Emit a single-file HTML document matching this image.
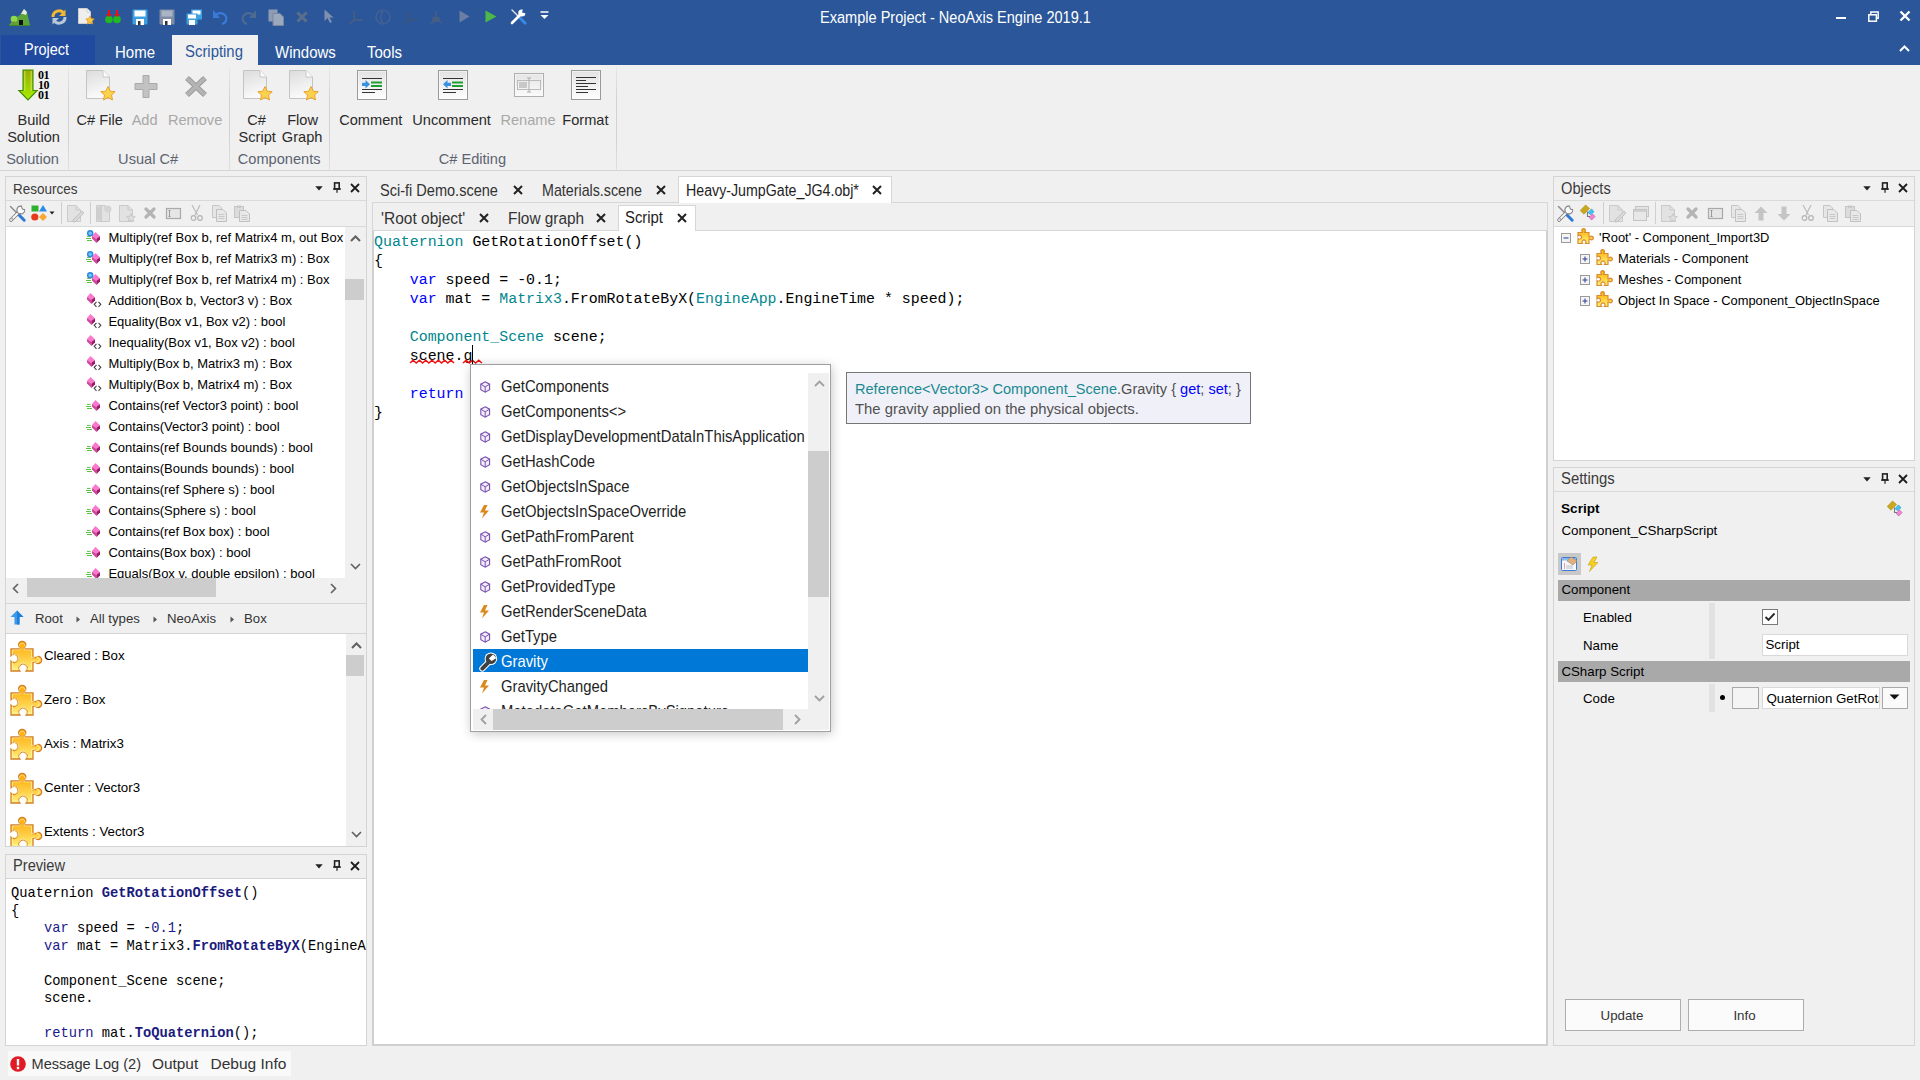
<!DOCTYPE html><html><head><meta charset="utf-8"><style>
*{margin:0;padding:0;box-sizing:border-box}
html,body{width:1920px;height:1080px;overflow:hidden;background:#f0f0f0;font-family:"Liberation Sans",sans-serif;color:#1e1e1e}
.a{position:absolute}
svg.a{overflow:visible}
.t{position:absolute;white-space:pre;line-height:1}
.m{font-family:"Liberation Mono",monospace}
</style></head><body>
<div class="a" style="left:0px;top:0px;width:1920px;height:65px;background:#2b579a"></div>
<div class="t " style="left:820px;top:10.68px;font-size:14.55px;color:#ffffff;transform:scaleY(1.07);transform-origin:0 12.32px;">Example Project - NeoAxis Engine 2019.1</div>
<div class="a" style="left:1836px;top:16.5px;width:9.5px;height:2.2px;background:#fff"></div>
<svg class="a" style="left:1866px;top:9px" width="14" height="14" viewBox="0 0 14 14"><rect x="2.8" y="5.8" width="7.6" height="6.4" fill="none" stroke="#fff" stroke-width="1.5"/><path d="M4.8 5.8V3H12.2V9.2H10.4" fill="none" stroke="#fff" stroke-width="1.4"/></svg>
<svg class="a" style="left:1899px;top:10px" width="12" height="12" viewBox="0 0 12 12"><path d="M1.5 1.5L10.5 10.5M10.5 1.5L1.5 10.5" stroke="#fff" stroke-width="2.3"/></svg>
<svg class="a" style="left:1899px;top:45px" width="11" height="7" viewBox="0 0 11 7"><path d="M1 6L5.5 1.5L10 6" fill="none" stroke="#fff" stroke-width="2"/></svg>
<div class="a" style="left:1px;top:35px;width:94px;height:30px;background:#2049a0"></div>
<div class="t " style="left:24px;top:42.76px;font-size:14.46px;color:#ffffff;transform:scaleY(1.08);transform-origin:0 12.24px;">Project</div>
<div class="t " style="left:115px;top:45.0px;font-size:15px;color:#ffffff;transform:scaleY(1.08);transform-origin:0 12.70px;">Home</div>
<div class="a" style="left:172px;top:35px;width:86px;height:30px;background:#f0f0f0"></div>
<div class="t " style="left:185px;top:45.08px;font-size:14.9px;color:#2b579a;transform:scaleY(1.08);transform-origin:0 12.62px;">Scripting</div>
<div class="t " style="left:275px;top:45.0px;font-size:15px;color:#ffffff;transform:scaleY(1.08);transform-origin:0 12.70px;">Windows</div>
<div class="t " style="left:367px;top:45.0px;font-size:15px;color:#ffffff;transform:scaleY(1.08);transform-origin:0 12.70px;">Tools</div>
<svg class="a" style="left:9px;top:9px" width="21" height="17" viewBox="0 0 21 17"><path d="M0 16L6 9L11 6L15 0L18 3L21 16Z" fill="#5aa43a"/><path d="M12 5L15 0L18 3L17 6L14 5Z" fill="#e8e8e8"/><circle cx="5" cy="10" r="3.3" fill="#8fd848"/><rect x="4.5" y="12" width="1" height="4" fill="#a07030"/><rect x="10" y="11" width="4" height="5" fill="#111"/><path d="M0 16H21V17H0Z" fill="#3d8a2a"/></svg>
<svg class="a" style="left:51px;top:9px" width="16" height="16" viewBox="0 0 16 16"><path d="M2 8A6 6 0 0 1 13 4.5" fill="none" stroke="#f2b830" stroke-width="3"/><path d="M14.5 0.5V7H8Z" fill="#f2b830"/><path d="M14 8A6 6 0 0 1 3 11.5" fill="none" stroke="#b8c8d8" stroke-width="3"/><path d="M1.5 15.5V9H8Z" fill="#b8c8d8"/></svg>
<svg class="a" style="left:78px;top:8px" width="18" height="17" viewBox="0 0 18 17"><g transform="scale(1.0)"><path d="M0.5 0.5H9L12.5 4V15.5H0.5Z" fill="#eeeeee" stroke="#cfcfcf"/><path d="M9 0.5V4H12.5" fill="#fff" stroke="#cfcfcf"/><path d="M12 8L13.3 10.7L16.2 11L14 13L14.7 16L12 14.5L9.3 16L10 13L7.8 11L10.7 10.7Z" fill="#f8c844" stroke="#e89a20" stroke-width="0.8"/></g></svg>
<svg class="a" style="left:105px;top:10px" width="17" height="14" viewBox="0 0 17 14"><circle cx="4" cy="9.5" r="3.8" fill="#22b822"/><circle cx="12" cy="9.5" r="3.8" fill="#22b822"/><path d="M3 0H5V4H7L4 7L1 4H3Z" fill="#ee1111"/><path d="M11 0H13V4H15L12 7L9 4H11Z" fill="#ee1111"/></svg>
<svg class="a" style="left:132px;top:9px" width="16" height="16" viewBox="0 0 16 16"><rect x="0.5" y="0.5" width="15" height="15" rx="1" fill="#3ea0e0"/><rect x="2.5" y="1.5" width="11" height="6" fill="#fff"/><rect x="4" y="10" width="8" height="6" fill="#fff"/><rect x="6" y="12" width="2.5" height="4" fill="#333"/></svg>
<svg class="a" style="left:159px;top:9px" width="16" height="16" viewBox="0 0 16 16"><rect x="0.5" y="0.5" width="15" height="15" rx="1" fill="#7f8ea6"/><rect x="2.5" y="1.5" width="11" height="6" fill="#a9b4c4"/><rect x="4" y="10" width="8" height="6" fill="#fff"/><rect x="6" y="12" width="2.5" height="4" fill="#333"/></svg>
<svg class="a" style="left:186px;top:9px" width="17" height="16" viewBox="0 0 17 16"><rect x="5" y="0.5" width="11" height="10" fill="#3ea0e0"/><rect x="6.5" y="1.5" width="8" height="4" fill="#fff"/><rect x="0.5" y="4.5" width="11" height="11" fill="#3ea0e0"/><rect x="2" y="5.5" width="8" height="4" fill="#fff"/><rect x="3" y="11" width="6" height="5" fill="#fff"/></svg>
<svg class="a" style="left:213px;top:9px" width="16" height="16" viewBox="0 0 16 16"><path d="M3 6A6 5.5 0 1 1 9 15" fill="none" stroke="#3a7ad8" stroke-width="2.2"/><path d="M0 1V9H7Z" fill="#3a7ad8"/></svg>
<svg class="a" style="left:240px;top:9px" width="16" height="16" viewBox="0 0 16 16"><path d="M13 6A6 5.5 0 1 0 7 15" fill="none" stroke="#4d6a90" stroke-width="2.2"/><path d="M16 1V9H9Z" fill="#4d6a90"/></svg>
<svg class="a" style="left:268px;top:9px" width="16" height="17" viewBox="0 0 16 17"><rect x="0.5" y="0.5" width="9" height="12" fill="#8d9bb3"/><path d="M5 4.5H12L15.5 8V16.5H5Z" fill="#9ba8bd" stroke="#7a889f"/></svg>
<svg class="a" style="left:296px;top:11px" width="12" height="12" viewBox="0 0 12 12"><path d="M1.5 1.5L10.5 10.5M10.5 1.5L1.5 10.5" stroke="#5c6e8c" stroke-width="3"/></svg>
<svg class="a" style="left:324px;top:9px" width="10" height="14" viewBox="0 0 10 14"><path d="M0.5 0.5V12L3.5 9L6 14L8 13L5.5 8.5H9.5Z" fill="#7e90b0"/></svg>
<svg class="a" style="left:349px;top:10px" width="15" height="15" viewBox="0 0 15 15"><path d="M5 1V10L1 14M5 10H14" fill="none" stroke="#4a5f80" stroke-width="1.5"/></svg>
<svg class="a" style="left:375px;top:9px" width="16" height="16" viewBox="0 0 16 16"><circle cx="8" cy="8" r="7" fill="none" stroke="#4a6390" stroke-width="1.2"/><path d="M8 2C5 5 5 11 8 14" fill="none" stroke="#4a6390" stroke-width="1.2"/></svg>
<svg class="a" style="left:403px;top:10px" width="15" height="15" viewBox="0 0 15 15"><path d="M5 1V10L1 14M5 10H14" fill="none" stroke="#3f5478" stroke-width="1.5"/></svg>
<svg class="a" style="left:429px;top:10px" width="15" height="15" viewBox="0 0 15 15"><path d="M7 1V9L2 14M7 9L13 13M4 8H10V11H4Z" fill="none" stroke="#4a5f80" stroke-width="1.5"/></svg>
<svg class="a" style="left:459px;top:10px" width="11" height="13" viewBox="0 0 11 13"><path d="M0.5 0.5L10.5 6.5L0.5 12.5Z" fill="#6a7fa3"/></svg>
<svg class="a" style="left:485px;top:10px" width="12" height="13" viewBox="0 0 12 13"><path d="M0.5 0.5L11.5 6.5L0.5 12.5Z" fill="#4cb84a"/></svg>
<svg class="a" style="left:510px;top:8px" width="17" height="17" viewBox="0 0 17 17"><path d="M2 2L7.5 7.5" stroke="#e8e8e8" stroke-width="1.4" stroke-linecap="round"/><path d="M9.8 9.8L15.2 15.2" stroke="#3a8ae8" stroke-width="2.8" stroke-linecap="round"/><path d="M2 15L9.5 7.5" stroke="#fff" stroke-width="2.6" stroke-linecap="round"/><circle cx="11.8" cy="5" r="3.6" fill="#fff"/><path d="M12 4.6L13.2 0.2L17.5 2.2L16.2 5.6Z" fill="#2b579a"/></svg>
<svg class="a" style="left:540px;top:11px" width="9" height="9" viewBox="0 0 9 9"><path d="M0.5 1H8.5" stroke="#fff" stroke-width="1.5"/><path d="M0.5 4H8.5L4.5 8Z" fill="#fff"/></svg>
<div class="a" style="left:0px;top:170px;width:1920px;height:1px;background:#d5d5d5"></div>
<div class="a" style="left:68px;top:66px;width:1px;height:104px;background:linear-gradient(#eaeaea,#d2d2d2 30%,#d2d2d2 70%,#e0e0e0)"></div>
<div class="a" style="left:229px;top:66px;width:1px;height:104px;background:linear-gradient(#eaeaea,#d2d2d2 30%,#d2d2d2 70%,#e0e0e0)"></div>
<div class="a" style="left:329px;top:66px;width:1px;height:104px;background:linear-gradient(#eaeaea,#d2d2d2 30%,#d2d2d2 70%,#e0e0e0)"></div>
<div class="a" style="left:616px;top:66px;width:1px;height:104px;background:linear-gradient(#eaeaea,#d2d2d2 30%,#d2d2d2 70%,#e0e0e0)"></div>
<div class="t" style="left:-166.25px;width:400px;text-align:center;top:112.84px;font-size:14.6px;color:#2a2a2a;">Build</div>
<div class="t" style="left:-166.5px;width:400px;text-align:center;top:129.54px;font-size:14.6px;color:#2a2a2a;">Solution</div>
<div class="t" style="left:-167.5px;width:400px;text-align:center;top:151.54px;font-size:14.6px;color:#5c6470;">Solution</div>
<div class="t" style="left:-100.3px;width:400px;text-align:center;top:112.84px;font-size:14.6px;color:#2a2a2a;">C# File</div>
<div class="t" style="left:-55.400000000000006px;width:400px;text-align:center;top:112.84px;font-size:14.6px;color:#a8a8a8;">Add</div>
<div class="t" style="left:-4.900000000000006px;width:400px;text-align:center;top:112.84px;font-size:14.6px;color:#a8a8a8;">Remove</div>
<div class="t" style="left:-51.900000000000006px;width:400px;text-align:center;top:151.54px;font-size:14.6px;color:#5c6470;">Usual C#</div>
<div class="t" style="left:56.5px;width:400px;text-align:center;top:112.84px;font-size:14.6px;color:#2a2a2a;">C#</div>
<div class="t" style="left:57.19999999999999px;width:400px;text-align:center;top:129.54px;font-size:14.6px;color:#2a2a2a;">Script</div>
<div class="t" style="left:102.60000000000002px;width:400px;text-align:center;top:112.84px;font-size:14.6px;color:#2a2a2a;">Flow</div>
<div class="t" style="left:102.10000000000002px;width:400px;text-align:center;top:129.54px;font-size:14.6px;color:#2a2a2a;">Graph</div>
<div class="t" style="left:79.19999999999999px;width:400px;text-align:center;top:151.54px;font-size:14.6px;color:#5c6470;">Components</div>
<div class="t" style="left:170.8px;width:400px;text-align:center;top:112.84px;font-size:14.6px;color:#2a2a2a;">Comment</div>
<div class="t" style="left:251.60000000000002px;width:400px;text-align:center;top:112.84px;font-size:14.6px;color:#2a2a2a;">Uncomment</div>
<div class="t" style="left:328px;width:400px;text-align:center;top:112.84px;font-size:14.6px;color:#a8a8a8;">Rename</div>
<div class="t" style="left:385.4px;width:400px;text-align:center;top:112.84px;font-size:14.6px;color:#2a2a2a;">Format</div>
<div class="t" style="left:272.4px;width:400px;text-align:center;top:151.54px;font-size:14.6px;color:#5c6470;">C# Editing</div>
<svg class="a" style="left:14px;top:66px" width="42" height="38" viewBox="0 0 42 38"><defs><linearGradient id="ga" x1="0" y1="0" x2="0" y2="1"><stop offset="0" stop-color="#98ac00"/><stop offset="1" stop-color="#a6ec00"/></linearGradient></defs><path d="M9 4H19V24.5H23.2L14 34L4.8 24.5H9Z" fill="url(#ga)" stroke="#3d8c00" stroke-width="1.1"/><path d="M10.8 5V25M17.2 5V25" stroke="#d6ee70" stroke-width="0.8"/><g font-family="Liberation Serif" font-weight="bold" font-size="12" fill="#000" letter-spacing="-0.6"><text x="24" y="12.8">01</text><text x="24" y="22.8">10</text><text x="24" y="32.8">01</text></g></svg>
<svg class="a" style="left:86px;top:70px" width="30" height="32" viewBox="0 0 30 32"><defs><linearGradient id="gd" x1="0" y1="0" x2="0.3" y2="1"><stop offset="0" stop-color="#dcdcdc"/><stop offset="1" stop-color="#fafafa"/></linearGradient></defs><path d="M0.5 0.5H17L23.5 7V28.5H0.5Z" fill="url(#gd)" stroke="#c4c4c4"/><path d="M17 0.5V7H23.5" fill="#fbfbfb" stroke="#c8c8c8"/><path d="M22 16.5L24.3 21.2L29.2 21.7L25.5 25L26.5 30L22 27.5L17.5 30L18.5 25L14.8 21.7L19.7 21.2Z" fill="#fbd24e" stroke="#e79b22" stroke-width="0.9"/></svg>
<svg class="a" style="left:134px;top:74px" width="25" height="25" viewBox="0 0 25 25"><path d="M9 1.5H15V9.5H23V15.5H15V23.5H9V15.5H1V9.5H9Z" fill="#c2c2c2" stroke="#a9a9a9"/></svg>
<svg class="a" style="left:184px;top:75px" width="24" height="23" viewBox="0 0 24 23"><path d="M3 3L21 20M21 3L3 20" stroke="#9d9d9d" stroke-width="5.5" stroke-linecap="butt"/><path d="M3 3L21 20M21 3L3 20" stroke="#b4b4b4" stroke-width="3.4" stroke-linecap="butt"/></svg>
<svg class="a" style="left:243px;top:70px" width="30" height="32" viewBox="0 0 30 32"><defs><linearGradient id="gd" x1="0" y1="0" x2="0.3" y2="1"><stop offset="0" stop-color="#dcdcdc"/><stop offset="1" stop-color="#fafafa"/></linearGradient></defs><path d="M0.5 0.5H17L23.5 7V28.5H0.5Z" fill="url(#gd)" stroke="#c4c4c4"/><path d="M17 0.5V7H23.5" fill="#fbfbfb" stroke="#c8c8c8"/><path d="M22 16.5L24.3 21.2L29.2 21.7L25.5 25L26.5 30L22 27.5L17.5 30L18.5 25L14.8 21.7L19.7 21.2Z" fill="#fbd24e" stroke="#e79b22" stroke-width="0.9"/></svg>
<svg class="a" style="left:289px;top:70px" width="30" height="32" viewBox="0 0 30 32"><defs><linearGradient id="gd" x1="0" y1="0" x2="0.3" y2="1"><stop offset="0" stop-color="#dcdcdc"/><stop offset="1" stop-color="#fafafa"/></linearGradient></defs><path d="M0.5 0.5H17L23.5 7V28.5H0.5Z" fill="url(#gd)" stroke="#c4c4c4"/><path d="M17 0.5V7H23.5" fill="#fbfbfb" stroke="#c8c8c8"/><path d="M22 16.5L24.3 21.2L29.2 21.7L25.5 25L26.5 30L22 27.5L17.5 30L18.5 25L14.8 21.7L19.7 21.2Z" fill="#fbd24e" stroke="#e79b22" stroke-width="0.9"/></svg>
<svg class="a" style="left:357px;top:70px" width="32" height="32" viewBox="0 0 32 32"><g opacity="1"><defs><linearGradient id="gf" x1="0" y1="0" x2="0" y2="1"><stop offset="0" stop-color="#e3e3e3"/><stop offset="1" stop-color="#fdfdfd"/></linearGradient></defs><rect x="0.5" y="0.5" width="29" height="29" fill="#fff" stroke="#9a9a9a"/><rect x="1.5" y="1.5" width="27" height="27" fill="url(#gf)"/><path d="M5 8.5H25M5 19.5H25M5 22.5H18" stroke="#333" stroke-width="1"/><path d="M14 12.5H25M14 16H25" stroke="#20a030" stroke-width="2"/><path d="M5 12.7H8.5V10L13 14.3L8.5 18.5V16H5Z" fill="#3a90e0"/></g></svg>
<svg class="a" style="left:438px;top:70px" width="32" height="32" viewBox="0 0 32 32"><g opacity="1"><defs><linearGradient id="gf" x1="0" y1="0" x2="0" y2="1"><stop offset="0" stop-color="#e3e3e3"/><stop offset="1" stop-color="#fdfdfd"/></linearGradient></defs><rect x="0.5" y="0.5" width="29" height="29" fill="#fff" stroke="#9a9a9a"/><rect x="1.5" y="1.5" width="27" height="27" fill="url(#gf)"/><path d="M5 8.5H25M5 19.5H25M5 22.5H18" stroke="#333" stroke-width="1"/><path d="M14 12.5H25M14 16H25" stroke="#20a030" stroke-width="2"/><path d="M13 12.7H9.5V10L5 14.3L9.5 18.5V16H13Z" fill="#3a90e0"/></g></svg>
<svg class="a" style="left:514px;top:73px" width="32" height="26" viewBox="0 0 32 26"><g opacity="0.75"><defs><linearGradient id="gf" x1="0" y1="0" x2="0" y2="1"><stop offset="0" stop-color="#e3e3e3"/><stop offset="1" stop-color="#fdfdfd"/></linearGradient></defs><rect x="0.5" y="0.5" width="29" height="23" fill="#fff" stroke="#9a9a9a"/><rect x="1.5" y="1.5" width="27" height="21" fill="url(#gf)"/><rect x="3.5" y="7.5" width="23" height="9" fill="none" stroke="#aaa"/><rect x="5" y="9" width="8" height="6" fill="#bbb"/><path d="M15 5V19M13 5H17M13 19H17" stroke="#999"/></g></svg>
<svg class="a" style="left:571px;top:70px" width="32" height="32" viewBox="0 0 32 32"><g opacity="1"><defs><linearGradient id="gf" x1="0" y1="0" x2="0" y2="1"><stop offset="0" stop-color="#e3e3e3"/><stop offset="1" stop-color="#fdfdfd"/></linearGradient></defs><rect x="0.5" y="0.5" width="29" height="29" fill="#fff" stroke="#9a9a9a"/><rect x="1.5" y="1.5" width="27" height="27" fill="url(#gf)"/><path d="M5 7.5H25M5 10.5H15M5 13.5H25M5 16.5H17M5 19.5H25M5 22.5H17" stroke="#333" stroke-width="1"/></g></svg>
<div class="a" style="left:5px;top:176px;width:362px;height:428px;border:1px solid #d4d4d4;background:#f0f0f0"></div>
<div class="a" style="left:6px;top:200px;width:360px;height:1px;background:#d9d9d9"></div>
<div class="a" style="left:6px;top:226px;width:360px;height:1px;background:#d9d9d9"></div>
<div class="t " style="left:13px;top:182.57px;font-size:13.5px;color:#3b3b3b;transform:scaleY(1.12);transform-origin:0 11.43px;">Resources</div>
<svg class="a" style="left:315px;top:186px" width="8" height="5" viewBox="0 0 8 5"><path d="M0.3 0.3H7.7L4 4.6Z" fill="#222"/></svg>
<svg class="a" style="left:333px;top:182px" width="8" height="11" viewBox="0 0 8 11"><rect x="1.6" y="0.9" width="4.6" height="6" fill="#f0f0f0" stroke="#222" stroke-width="1.6"/><rect x="0" y="6.4" width="8" height="1.3" fill="#222"/><rect x="3.4" y="7.5" width="1.2" height="3.3" fill="#222"/></svg>
<svg class="a" style="left:350px;top:183px" width="10" height="10" viewBox="0 0 10 10"><path d="M1 1L9 9M9 1L1 9" stroke="#1c1c1c" stroke-width="1.8"/></svg>
<svg class="a" style="left:9px;top:205px" width="17" height="17" viewBox="0 0 17 17"><path d="M1.5 1.5L7.5 7.5" stroke="#8c8c8c" stroke-width="1.5" stroke-linecap="round"/><path d="M9.8 9.8L15.2 15.2" stroke="#2a7ad6" stroke-width="3" stroke-linecap="round"/><path d="M2 15L9.5 7.5" stroke="#7a7a7a" stroke-width="3.6" stroke-linecap="round"/><path d="M2 15L9.5 7.5" stroke="#fbfbfb" stroke-width="1.8" stroke-linecap="round"/><circle cx="11.8" cy="5" r="3.9" fill="#fbfbfb" stroke="#7a7a7a" stroke-width="1.1"/><path d="M12 4.6L13.2 0.2L17.5 2.2L16.2 5.6Z" fill="#f0f0f0"/><path d="M12.6 1.6L13.4 4.2L16 4.6" fill="none" stroke="#7a7a7a" stroke-width="1"/><circle cx="3.2" cy="13.8" r="0.9" fill="#999"/></svg>
<svg class="a" style="left:31px;top:205px" width="24" height="16" viewBox="0 0 24 16"><rect x="0.5" y="0.5" width="7" height="6" fill="#30b030"/><path d="M12 0L16 6.5H8Z" fill="#2a8ce8"/><circle cx="3.8" cy="12" r="3.6" fill="#e83a1a"/><path d="M12 8L16 12L12 16L8 12Z" fill="#f8a830"/><path d="M18.5 6.5H23.5L21 9.5Z" fill="#222"/></svg>
<div class="a" style="left:61px;top:202px;width:1px;height:22px;background:#cfcfcf"></div>
<svg class="a" style="left:67px;top:205px" width="17" height="17" viewBox="0 0 17 17"><path d="M0.5 0.5H9L13.5 5V16.5H0.5Z" fill="#e2e2e2" stroke="#cacaca"/><path d="M9 0.5V5H13.5" fill="none" stroke="#cacaca"/><path d="M6 15L15 6L17 8L8 17H6Z" fill="#d8d8d8" stroke="#bdbdbd" stroke-width="0.8"/></svg>
<div class="a" style="left:90px;top:202px;width:1px;height:22px;background:#cfcfcf"></div>
<svg class="a" style="left:96px;top:205px" width="17" height="17" viewBox="0 0 17 17"><path d="M0.5 0.5H9L13.5 5V16.5H0.5Z" fill="#e2e2e2" stroke="#cacaca"/><path d="M9 0.5V5H13.5" fill="none" stroke="#cacaca"/><path d="M0.5 2.5L6 0.5V16.5L0.5 14.5Z" fill="#cfcfcf"/><circle cx="12" cy="4" r="3.5" fill="#d4d4d4"/></svg>
<svg class="a" style="left:119px;top:205px" width="17" height="17" viewBox="0 0 17 17"><path d="M0.5 0.5H9L13.5 5V16.5H0.5Z" fill="#e2e2e2" stroke="#cacaca"/><path d="M9 0.5V5H13.5" fill="none" stroke="#cacaca"/><path d="M12 8.5L13.3 11.3L16.3 11.6L14 13.6L14.8 16.5L12 15L9.2 16.5L10 13.6L7.7 11.6L10.7 11.3Z" fill="#dedede" stroke="#c4c4c4" stroke-width="0.8"/></svg>
<svg class="a" style="left:144px;top:207px" width="12" height="12" viewBox="0 0 12 12"><path d="M2 2L10 10M10 2L2 10" stroke="#b4b4b4" stroke-width="3.2" stroke-linecap="round"/></svg>
<svg class="a" style="left:166px;top:208px" width="15" height="11" viewBox="0 0 15 11"><rect x="0.5" y="0.5" width="14" height="10" fill="#e6e6e6" stroke="#a9a9a9" stroke-width="1.2"/><path d="M3.5 2.5V8.5M2.5 2.5H4.5M2.5 8.5H4.5" stroke="#888" stroke-width="0.8"/></svg>
<svg class="a" style="left:190px;top:205px" width="13" height="16" viewBox="0 0 13 16"><path d="M2 0L7.5 10M10 0L5 10" stroke="#bbb" stroke-width="1.2"/><circle cx="3.5" cy="13" r="2.3" fill="none" stroke="#b4b4b4" stroke-width="1.2"/><circle cx="10" cy="13" r="2.3" fill="none" stroke="#b4b4b4" stroke-width="1.2"/></svg>
<svg class="a" style="left:212px;top:205px" width="15" height="17" viewBox="0 0 15 17"><path d="M0.5 0.5H7L9.5 3V12.5H0.5Z" fill="#e6e6e6" stroke="#c6c6c6"/><path d="M4.5 4.5H11L14.5 8V16.5H4.5Z" fill="#e8e8e8" stroke="#c0c0c0"/><path d="M6.5 9.5H12.5M6.5 11.5H12.5M6.5 13.5H12.5" stroke="#c8c8c8"/></svg>
<svg class="a" style="left:234px;top:205px" width="16" height="17" viewBox="0 0 16 17"><rect x="0.5" y="1.5" width="9" height="11" fill="#dcdcdc" stroke="#c4c4c4"/><rect x="3" y="0.5" width="4" height="2.5" fill="#c8c8c8"/><path d="M5.5 5.5H12L15.5 9V16.5H5.5Z" fill="#e8e8e8" stroke="#c0c0c0"/><path d="M7.5 10.5H13.5M7.5 12.5H13.5M7.5 14.5H13.5" stroke="#c8c8c8"/></svg>
<div class="a" style="left:6px;top:227px;width:339px;height:351px;background:#fff"></div>
<div class="a" style="left:6px;top:227px;width:339px;height:351px;overflow:hidden">
<svg class="a" style="left:76px;top:1px" width="20" height="18" viewBox="0 0 20 18"><path d="M5 8.4H8.6M4 10.5H9M5 12.5H10" stroke="#5cc040" stroke-width="1"/><path d="M13.50 4.00L18.00 8.20L14.30 10.80L10.00 8.10Z" fill="#fb78cc"/><path d="M10.00 8.10L14.30 10.80L14.50 15.10L10.00 10.60Z" fill="#d2449e"/><path d="M14.30 10.80L18.00 8.20L18.00 11.60L14.50 15.10Z" fill="#a0186c"/><circle cx="8.2" cy="5.3" r="3.2" fill="#2f86dc"/><circle cx="8.2" cy="5.3" r="1.7" fill="#6cc8ff"/></svg>
<div class="t " style="left:102.4px;top:3.74px;font-size:13px;color:#000;">Multiply(ref Box b, ref Matrix4 m, out Box</div>
<svg class="a" style="left:76px;top:22px" width="20" height="18" viewBox="0 0 20 18"><path d="M5 8.4H8.6M4 10.5H9M5 12.5H10" stroke="#5cc040" stroke-width="1"/><path d="M13.50 4.00L18.00 8.20L14.30 10.80L10.00 8.10Z" fill="#fb78cc"/><path d="M10.00 8.10L14.30 10.80L14.50 15.10L10.00 10.60Z" fill="#d2449e"/><path d="M14.30 10.80L18.00 8.20L18.00 11.60L14.50 15.10Z" fill="#a0186c"/><circle cx="8.2" cy="5.3" r="3.2" fill="#2f86dc"/><circle cx="8.2" cy="5.3" r="1.7" fill="#6cc8ff"/></svg>
<div class="t " style="left:102.4px;top:24.74px;font-size:13px;color:#000;">Multiply(ref Box b, ref Matrix3 m) : Box</div>
<svg class="a" style="left:76px;top:43px" width="20" height="18" viewBox="0 0 20 18"><path d="M5 8.4H8.6M4 10.5H9M5 12.5H10" stroke="#5cc040" stroke-width="1"/><path d="M13.50 4.00L18.00 8.20L14.30 10.80L10.00 8.10Z" fill="#fb78cc"/><path d="M10.00 8.10L14.30 10.80L14.50 15.10L10.00 10.60Z" fill="#d2449e"/><path d="M14.30 10.80L18.00 8.20L18.00 11.60L14.50 15.10Z" fill="#a0186c"/><circle cx="8.2" cy="5.3" r="3.2" fill="#2f86dc"/><circle cx="8.2" cy="5.3" r="1.7" fill="#6cc8ff"/></svg>
<div class="t " style="left:102.4px;top:45.74px;font-size:13px;color:#000;">Multiply(ref Box b, ref Matrix4 m) : Box</div>
<svg class="a" style="left:76px;top:64px" width="20" height="18" viewBox="0 0 20 18"><path d="M8.50 2.00L13.00 6.20L9.30 8.80L5.00 6.10Z" fill="#fb78cc"/><path d="M5.00 6.10L9.30 8.80L9.50 13.10L5.00 8.60Z" fill="#d2449e"/><path d="M9.30 8.80L13.00 6.20L13.00 9.60L9.50 13.10Z" fill="#a0186c"/><path d="M14.5 10.8L12.2 13.3L14.5 15.8M16.5 10.8L18.8 13.3L16.5 15.8" fill="none" stroke="#444" stroke-width="1.1"/></svg>
<div class="t " style="left:102.4px;top:66.74px;font-size:13px;color:#000;">Addition(Box b, Vector3 v) : Box</div>
<svg class="a" style="left:76px;top:85px" width="20" height="18" viewBox="0 0 20 18"><path d="M8.50 2.00L13.00 6.20L9.30 8.80L5.00 6.10Z" fill="#fb78cc"/><path d="M5.00 6.10L9.30 8.80L9.50 13.10L5.00 8.60Z" fill="#d2449e"/><path d="M9.30 8.80L13.00 6.20L13.00 9.60L9.50 13.10Z" fill="#a0186c"/><path d="M14.5 10.8L12.2 13.3L14.5 15.8M16.5 10.8L18.8 13.3L16.5 15.8" fill="none" stroke="#444" stroke-width="1.1"/></svg>
<div class="t " style="left:102.4px;top:87.74px;font-size:13px;color:#000;">Equality(Box v1, Box v2) : bool</div>
<svg class="a" style="left:76px;top:106px" width="20" height="18" viewBox="0 0 20 18"><path d="M8.50 2.00L13.00 6.20L9.30 8.80L5.00 6.10Z" fill="#fb78cc"/><path d="M5.00 6.10L9.30 8.80L9.50 13.10L5.00 8.60Z" fill="#d2449e"/><path d="M9.30 8.80L13.00 6.20L13.00 9.60L9.50 13.10Z" fill="#a0186c"/><path d="M14.5 10.8L12.2 13.3L14.5 15.8M16.5 10.8L18.8 13.3L16.5 15.8" fill="none" stroke="#444" stroke-width="1.1"/></svg>
<div class="t " style="left:102.4px;top:108.74px;font-size:13px;color:#000;">Inequality(Box v1, Box v2) : bool</div>
<svg class="a" style="left:76px;top:127px" width="20" height="18" viewBox="0 0 20 18"><path d="M8.50 2.00L13.00 6.20L9.30 8.80L5.00 6.10Z" fill="#fb78cc"/><path d="M5.00 6.10L9.30 8.80L9.50 13.10L5.00 8.60Z" fill="#d2449e"/><path d="M9.30 8.80L13.00 6.20L13.00 9.60L9.50 13.10Z" fill="#a0186c"/><path d="M14.5 10.8L12.2 13.3L14.5 15.8M16.5 10.8L18.8 13.3L16.5 15.8" fill="none" stroke="#444" stroke-width="1.1"/></svg>
<div class="t " style="left:102.4px;top:129.74px;font-size:13px;color:#000;">Multiply(Box b, Matrix3 m) : Box</div>
<svg class="a" style="left:76px;top:148px" width="20" height="18" viewBox="0 0 20 18"><path d="M8.50 2.00L13.00 6.20L9.30 8.80L5.00 6.10Z" fill="#fb78cc"/><path d="M5.00 6.10L9.30 8.80L9.50 13.10L5.00 8.60Z" fill="#d2449e"/><path d="M9.30 8.80L13.00 6.20L13.00 9.60L9.50 13.10Z" fill="#a0186c"/><path d="M14.5 10.8L12.2 13.3L14.5 15.8M16.5 10.8L18.8 13.3L16.5 15.8" fill="none" stroke="#444" stroke-width="1.1"/></svg>
<div class="t " style="left:102.4px;top:150.74px;font-size:13px;color:#000;">Multiply(Box b, Matrix4 m) : Box</div>
<svg class="a" style="left:76px;top:169px" width="20" height="18" viewBox="0 0 20 18"><path d="M5 8.4H8.6M4 10.5H9M5 12.5H10" stroke="#5cc040" stroke-width="1"/><path d="M13.50 4.00L18.00 8.20L14.30 10.80L10.00 8.10Z" fill="#fb78cc"/><path d="M10.00 8.10L14.30 10.80L14.50 15.10L10.00 10.60Z" fill="#d2449e"/><path d="M14.30 10.80L18.00 8.20L18.00 11.60L14.50 15.10Z" fill="#a0186c"/></svg>
<div class="t " style="left:102.4px;top:171.74px;font-size:13px;color:#000;">Contains(ref Vector3 point) : bool</div>
<svg class="a" style="left:76px;top:190px" width="20" height="18" viewBox="0 0 20 18"><path d="M5 8.4H8.6M4 10.5H9M5 12.5H10" stroke="#5cc040" stroke-width="1"/><path d="M13.50 4.00L18.00 8.20L14.30 10.80L10.00 8.10Z" fill="#fb78cc"/><path d="M10.00 8.10L14.30 10.80L14.50 15.10L10.00 10.60Z" fill="#d2449e"/><path d="M14.30 10.80L18.00 8.20L18.00 11.60L14.50 15.10Z" fill="#a0186c"/></svg>
<div class="t " style="left:102.4px;top:192.74px;font-size:13px;color:#000;">Contains(Vector3 point) : bool</div>
<svg class="a" style="left:76px;top:211px" width="20" height="18" viewBox="0 0 20 18"><path d="M5 8.4H8.6M4 10.5H9M5 12.5H10" stroke="#5cc040" stroke-width="1"/><path d="M13.50 4.00L18.00 8.20L14.30 10.80L10.00 8.10Z" fill="#fb78cc"/><path d="M10.00 8.10L14.30 10.80L14.50 15.10L10.00 10.60Z" fill="#d2449e"/><path d="M14.30 10.80L18.00 8.20L18.00 11.60L14.50 15.10Z" fill="#a0186c"/></svg>
<div class="t " style="left:102.4px;top:213.74px;font-size:13px;color:#000;">Contains(ref Bounds bounds) : bool</div>
<svg class="a" style="left:76px;top:232px" width="20" height="18" viewBox="0 0 20 18"><path d="M5 8.4H8.6M4 10.5H9M5 12.5H10" stroke="#5cc040" stroke-width="1"/><path d="M13.50 4.00L18.00 8.20L14.30 10.80L10.00 8.10Z" fill="#fb78cc"/><path d="M10.00 8.10L14.30 10.80L14.50 15.10L10.00 10.60Z" fill="#d2449e"/><path d="M14.30 10.80L18.00 8.20L18.00 11.60L14.50 15.10Z" fill="#a0186c"/></svg>
<div class="t " style="left:102.4px;top:234.74px;font-size:13px;color:#000;">Contains(Bounds bounds) : bool</div>
<svg class="a" style="left:76px;top:253px" width="20" height="18" viewBox="0 0 20 18"><path d="M5 8.4H8.6M4 10.5H9M5 12.5H10" stroke="#5cc040" stroke-width="1"/><path d="M13.50 4.00L18.00 8.20L14.30 10.80L10.00 8.10Z" fill="#fb78cc"/><path d="M10.00 8.10L14.30 10.80L14.50 15.10L10.00 10.60Z" fill="#d2449e"/><path d="M14.30 10.80L18.00 8.20L18.00 11.60L14.50 15.10Z" fill="#a0186c"/></svg>
<div class="t " style="left:102.4px;top:255.74px;font-size:13px;color:#000;">Contains(ref Sphere s) : bool</div>
<svg class="a" style="left:76px;top:274px" width="20" height="18" viewBox="0 0 20 18"><path d="M5 8.4H8.6M4 10.5H9M5 12.5H10" stroke="#5cc040" stroke-width="1"/><path d="M13.50 4.00L18.00 8.20L14.30 10.80L10.00 8.10Z" fill="#fb78cc"/><path d="M10.00 8.10L14.30 10.80L14.50 15.10L10.00 10.60Z" fill="#d2449e"/><path d="M14.30 10.80L18.00 8.20L18.00 11.60L14.50 15.10Z" fill="#a0186c"/></svg>
<div class="t " style="left:102.4px;top:276.74px;font-size:13px;color:#000;">Contains(Sphere s) : bool</div>
<svg class="a" style="left:76px;top:295px" width="20" height="18" viewBox="0 0 20 18"><path d="M5 8.4H8.6M4 10.5H9M5 12.5H10" stroke="#5cc040" stroke-width="1"/><path d="M13.50 4.00L18.00 8.20L14.30 10.80L10.00 8.10Z" fill="#fb78cc"/><path d="M10.00 8.10L14.30 10.80L14.50 15.10L10.00 10.60Z" fill="#d2449e"/><path d="M14.30 10.80L18.00 8.20L18.00 11.60L14.50 15.10Z" fill="#a0186c"/></svg>
<div class="t " style="left:102.4px;top:297.74px;font-size:13px;color:#000;">Contains(ref Box box) : bool</div>
<svg class="a" style="left:76px;top:316px" width="20" height="18" viewBox="0 0 20 18"><path d="M5 8.4H8.6M4 10.5H9M5 12.5H10" stroke="#5cc040" stroke-width="1"/><path d="M13.50 4.00L18.00 8.20L14.30 10.80L10.00 8.10Z" fill="#fb78cc"/><path d="M10.00 8.10L14.30 10.80L14.50 15.10L10.00 10.60Z" fill="#d2449e"/><path d="M14.30 10.80L18.00 8.20L18.00 11.60L14.50 15.10Z" fill="#a0186c"/></svg>
<div class="t " style="left:102.4px;top:318.74px;font-size:13px;color:#000;">Contains(Box box) : bool</div>
<svg class="a" style="left:76px;top:337px" width="20" height="18" viewBox="0 0 20 18"><path d="M5 8.4H8.6M4 10.5H9M5 12.5H10" stroke="#5cc040" stroke-width="1"/><path d="M13.50 4.00L18.00 8.20L14.30 10.80L10.00 8.10Z" fill="#fb78cc"/><path d="M10.00 8.10L14.30 10.80L14.50 15.10L10.00 10.60Z" fill="#d2449e"/><path d="M14.30 10.80L18.00 8.20L18.00 11.60L14.50 15.10Z" fill="#a0186c"/></svg>
<div class="t " style="left:102.4px;top:339.74px;font-size:13px;color:#000;">Equals(Box v, double epsilon) : bool</div>
</div>
<div class="a" style="left:345px;top:227px;width:21px;height:351px;background:#f0f0f0"></div>
<svg class="a" style="left:350px;top:235px" width="11" height="7" viewBox="0 0 11 7"><path d="M1 6L5.5 1.5L10 6" fill="none" stroke="#606060" stroke-width="2"/></svg>
<svg class="a" style="left:350px;top:563px" width="11" height="7" viewBox="0 0 11 7"><path d="M1 1L5.5 5.5L10 1" fill="none" stroke="#606060" stroke-width="1.6"/></svg>
<div class="a" style="left:345px;top:279px;width:19px;height:21px;background:#cdcdcd"></div>
<div class="a" style="left:6px;top:578px;width:339px;height:19px;background:#f0f0f0"></div>
<svg class="a" style="left:12px;top:583px" width="7" height="11" viewBox="0 0 7 11"><path d="M6 1L1.5 5.5L6 10" fill="none" stroke="#606060" stroke-width="1.6"/></svg>
<svg class="a" style="left:330px;top:583px" width="7" height="11" viewBox="0 0 7 11"><path d="M1 1L5.5 5.5L1 10" fill="none" stroke="#606060" stroke-width="1.6"/></svg>
<div class="a" style="left:27px;top:578px;width:189px;height:19px;background:#cdcdcd"></div>
<div class="a" style="left:5px;top:603px;width:362px;height:244px;border:1px solid #d4d4d4;background:#f0f0f0"></div>
<div class="a" style="left:6px;top:633px;width:360px;height:1px;background:#d4d4d4"></div>
<svg class="a" style="left:10px;top:610px" width="14" height="15" viewBox="0 0 14 15"><path d="M7 0.5L13.5 7H9.5V14.5H4.5V7H0.5Z" fill="#3a9ae8"/><path d="M7 0.5L13.5 7H9.5V14.5H7Z" fill="#1d7fd8"/></svg>
<div class="t " style="left:35px;top:611.82px;font-size:13.2px;color:#333;">Root</div>
<div class="t " style="left:90px;top:611.82px;font-size:13.2px;color:#333;">All types</div>
<div class="t " style="left:167px;top:611.82px;font-size:13.2px;color:#333;">NeoAxis</div>
<div class="t " style="left:244px;top:611.82px;font-size:13.2px;color:#333;">Box</div>
<svg class="a" style="left:76px;top:616px" width="5" height="7" viewBox="0 0 5 7"><path d="M0.5 0.5L4 3.5L0.5 6.5Z" fill="#555"/></svg>
<svg class="a" style="left:153px;top:616px" width="5" height="7" viewBox="0 0 5 7"><path d="M0.5 0.5L4 3.5L0.5 6.5Z" fill="#555"/></svg>
<svg class="a" style="left:230px;top:616px" width="5" height="7" viewBox="0 0 5 7"><path d="M0.5 0.5L4 3.5L0.5 6.5Z" fill="#555"/></svg>
<div class="a" style="left:6px;top:634px;width:340px;height:212px;background:#fff"></div>
<div class="a" style="left:6px;top:634px;width:340px;height:212px;overflow:hidden">
<svg class="a" style="left:-1px;top:2.000000000000046px" width="36" height="36" viewBox="0 0 36 36"><g transform="scale(1.0)"><defs><linearGradient id="gp" x1="0" y1="0" x2="0" y2="1"><stop offset="0" stop-color="#ffa800"/><stop offset="0.5" stop-color="#ffc83a"/><stop offset="1" stop-color="#fff07a"/></linearGradient></defs><path d="M6 13H15V11.8A3.6 3.6 0 1 1 19.4 11.8V13H28V21.6H30.4A3.6 3.6 0 1 1 30.4 26.4H28V35H21.2A4.2 4.2 0 1 0 14.8 35H6V25.2A4.1 4.1 0 1 0 6 19.6Z" fill="url(#gp)" stroke="#d4802a" stroke-width="1.3"/><path d="M6 13H15V11.8A3.6 3.6 0 1 1 19.4 11.8V13H28V21.6H30.4A3.6 3.6 0 1 1 30.4 26.4H28V35H21.2A4.2 4.2 0 1 0 14.8 35H6V25.2A4.1 4.1 0 1 0 6 19.6Z" transform="translate(2.2 2.6) scale(0.87)" fill="none" stroke="#fff6b0" stroke-width="1" opacity="0.8"/></g></svg>
<div class="t " style="left:38px;top:15.44px;font-size:13.3px;color:#000;">Cleared : Box</div>
<svg class="a" style="left:-1px;top:46.00000000000004px" width="36" height="36" viewBox="0 0 36 36"><g transform="scale(1.0)"><defs><linearGradient id="gp" x1="0" y1="0" x2="0" y2="1"><stop offset="0" stop-color="#ffa800"/><stop offset="0.5" stop-color="#ffc83a"/><stop offset="1" stop-color="#fff07a"/></linearGradient></defs><path d="M6 13H15V11.8A3.6 3.6 0 1 1 19.4 11.8V13H28V21.6H30.4A3.6 3.6 0 1 1 30.4 26.4H28V35H21.2A4.2 4.2 0 1 0 14.8 35H6V25.2A4.1 4.1 0 1 0 6 19.6Z" fill="url(#gp)" stroke="#d4802a" stroke-width="1.3"/><path d="M6 13H15V11.8A3.6 3.6 0 1 1 19.4 11.8V13H28V21.6H30.4A3.6 3.6 0 1 1 30.4 26.4H28V35H21.2A4.2 4.2 0 1 0 14.8 35H6V25.2A4.1 4.1 0 1 0 6 19.6Z" transform="translate(2.2 2.6) scale(0.87)" fill="none" stroke="#fff6b0" stroke-width="1" opacity="0.8"/></g></svg>
<div class="t " style="left:38px;top:59.44px;font-size:13.3px;color:#000;">Zero : Box</div>
<svg class="a" style="left:-1px;top:90.00000000000004px" width="36" height="36" viewBox="0 0 36 36"><g transform="scale(1.0)"><defs><linearGradient id="gp" x1="0" y1="0" x2="0" y2="1"><stop offset="0" stop-color="#ffa800"/><stop offset="0.5" stop-color="#ffc83a"/><stop offset="1" stop-color="#fff07a"/></linearGradient></defs><path d="M6 13H15V11.8A3.6 3.6 0 1 1 19.4 11.8V13H28V21.6H30.4A3.6 3.6 0 1 1 30.4 26.4H28V35H21.2A4.2 4.2 0 1 0 14.8 35H6V25.2A4.1 4.1 0 1 0 6 19.6Z" fill="url(#gp)" stroke="#d4802a" stroke-width="1.3"/><path d="M6 13H15V11.8A3.6 3.6 0 1 1 19.4 11.8V13H28V21.6H30.4A3.6 3.6 0 1 1 30.4 26.4H28V35H21.2A4.2 4.2 0 1 0 14.8 35H6V25.2A4.1 4.1 0 1 0 6 19.6Z" transform="translate(2.2 2.6) scale(0.87)" fill="none" stroke="#fff6b0" stroke-width="1" opacity="0.8"/></g></svg>
<div class="t " style="left:38px;top:103.44px;font-size:13.3px;color:#000;">Axis : Matrix3</div>
<svg class="a" style="left:-1px;top:134.00000000000006px" width="36" height="36" viewBox="0 0 36 36"><g transform="scale(1.0)"><defs><linearGradient id="gp" x1="0" y1="0" x2="0" y2="1"><stop offset="0" stop-color="#ffa800"/><stop offset="0.5" stop-color="#ffc83a"/><stop offset="1" stop-color="#fff07a"/></linearGradient></defs><path d="M6 13H15V11.8A3.6 3.6 0 1 1 19.4 11.8V13H28V21.6H30.4A3.6 3.6 0 1 1 30.4 26.4H28V35H21.2A4.2 4.2 0 1 0 14.8 35H6V25.2A4.1 4.1 0 1 0 6 19.6Z" fill="url(#gp)" stroke="#d4802a" stroke-width="1.3"/><path d="M6 13H15V11.8A3.6 3.6 0 1 1 19.4 11.8V13H28V21.6H30.4A3.6 3.6 0 1 1 30.4 26.4H28V35H21.2A4.2 4.2 0 1 0 14.8 35H6V25.2A4.1 4.1 0 1 0 6 19.6Z" transform="translate(2.2 2.6) scale(0.87)" fill="none" stroke="#fff6b0" stroke-width="1" opacity="0.8"/></g></svg>
<div class="t " style="left:38px;top:147.44px;font-size:13.3px;color:#000;">Center : Vector3</div>
<svg class="a" style="left:-1px;top:178.00000000000006px" width="36" height="36" viewBox="0 0 36 36"><g transform="scale(1.0)"><defs><linearGradient id="gp" x1="0" y1="0" x2="0" y2="1"><stop offset="0" stop-color="#ffa800"/><stop offset="0.5" stop-color="#ffc83a"/><stop offset="1" stop-color="#fff07a"/></linearGradient></defs><path d="M6 13H15V11.8A3.6 3.6 0 1 1 19.4 11.8V13H28V21.6H30.4A3.6 3.6 0 1 1 30.4 26.4H28V35H21.2A4.2 4.2 0 1 0 14.8 35H6V25.2A4.1 4.1 0 1 0 6 19.6Z" fill="url(#gp)" stroke="#d4802a" stroke-width="1.3"/><path d="M6 13H15V11.8A3.6 3.6 0 1 1 19.4 11.8V13H28V21.6H30.4A3.6 3.6 0 1 1 30.4 26.4H28V35H21.2A4.2 4.2 0 1 0 14.8 35H6V25.2A4.1 4.1 0 1 0 6 19.6Z" transform="translate(2.2 2.6) scale(0.87)" fill="none" stroke="#fff6b0" stroke-width="1" opacity="0.8"/></g></svg>
<div class="t " style="left:38px;top:191.44px;font-size:13.3px;color:#000;">Extents : Vector3</div>
</div>
<div class="a" style="left:346px;top:634px;width:20px;height:212px;background:#f0f0f0"></div>
<svg class="a" style="left:351px;top:642px" width="11" height="7" viewBox="0 0 11 7"><path d="M1 6L5.5 1.5L10 6" fill="none" stroke="#606060" stroke-width="2"/></svg>
<svg class="a" style="left:351px;top:831px" width="11" height="7" viewBox="0 0 11 7"><path d="M1 1L5.5 5.5L10 1" fill="none" stroke="#606060" stroke-width="1.6"/></svg>
<div class="a" style="left:346px;top:655px;width:18px;height:21px;background:#cdcdcd"></div>
<div class="a" style="left:5px;top:854px;width:362px;height:192px;border:1px solid #d4d4d4;background:#f0f0f0"></div>
<div class="a" style="left:6px;top:878px;width:360px;height:1px;background:#d4d4d4"></div>
<div class="t " style="left:13px;top:858.9px;font-size:14.65px;color:#3b3b3b;transform:scaleY(1.12);transform-origin:0 12.40px;">Preview</div>
<svg class="a" style="left:315px;top:864px" width="8" height="5" viewBox="0 0 8 5"><path d="M0.3 0.3H7.7L4 4.6Z" fill="#222"/></svg>
<svg class="a" style="left:333px;top:860px" width="8" height="11" viewBox="0 0 8 11"><rect x="1.6" y="0.9" width="4.6" height="6" fill="#f0f0f0" stroke="#222" stroke-width="1.6"/><rect x="0" y="6.4" width="8" height="1.3" fill="#222"/><rect x="3.4" y="7.5" width="1.2" height="3.3" fill="#222"/></svg>
<svg class="a" style="left:350px;top:861px" width="10" height="10" viewBox="0 0 10 10"><path d="M1 1L9 9M9 1L1 9" stroke="#1c1c1c" stroke-width="1.8"/></svg>
<div class="a" style="left:6px;top:879px;width:360px;height:166px;background:#fff"></div>
<div class="a" style="left:6px;top:879px;width:360px;height:166px;overflow:hidden">
<div class="t m" style="left:5px;top:8.07px;font-size:13.75px;color:#000">Quaternion <b style="color:#1b1b7e">GetRotationOffset</b>()</div>
<div class="t m" style="left:5px;top:25.57px;font-size:13.75px;color:#000">{</div>
<div class="t m" style="left:5px;top:43.07px;font-size:13.75px;color:#000">    <span style="color:#1a1a8a">var</span> speed = -<span style="color:#1a1a8a">0.1</span>;</div>
<div class="t m" style="left:5px;top:60.57px;font-size:13.75px;color:#000">    <span style="color:#1a1a8a">var</span> mat = Matrix3.<b style="color:#1b1b7e">FromRotateByX</b>(EngineApp.EngineTime * speed);</div>
<div class="t m" style="left:5px;top:95.57px;font-size:13.75px;color:#000">    Component_Scene scene;</div>
<div class="t m" style="left:5px;top:113.07px;font-size:13.75px;color:#000">    scene.</div>
<div class="t m" style="left:5px;top:148.07px;font-size:13.75px;color:#000">    <span style="color:#1a1a8a">return</span> mat.<b style="color:#1b1b7e">ToQuaternion</b>();</div>
</div>
<div class="a" style="left:8px;top:1051px;width:283px;height:25px;background:#f9f9f9"></div>
<svg class="a" style="left:10px;top:1056px" width="16" height="16" viewBox="0 0 16 16"><circle cx="8" cy="8" r="7.8" fill="#e01b24"/><rect x="6.8" y="3" width="2.4" height="6.5" fill="#fff"/><rect x="6.8" y="10.8" width="2.4" height="2.4" fill="#fff"/></svg>
<div class="t " style="left:31.5px;top:1056.64px;font-size:14.6px;color:#333;">Message Log (2)</div>
<div class="t " style="left:152px;top:1055.96px;font-size:15.4px;color:#333;">Output</div>
<div class="t " style="left:210.5px;top:1055.88px;font-size:15.5px;color:#333;">Debug Info</div>
<div class="a" style="left:372px;top:202px;width:306px;height:1px;background:#d6d6d6"></div>
<div class="a" style="left:892px;top:202px;width:656px;height:1px;background:#d6d6d6"></div>
<div class="a" style="left:678px;top:176px;width:214px;height:27px;background:#fff;border:1px solid #d6d6d6;border-bottom:none"></div>
<div class="t " style="left:380px;top:183.69px;font-size:14.54px;color:#333;transform:scaleY(1.1);transform-origin:0 12.31px;">Sci-fi Demo.scene</div>
<svg class="a" style="left:513px;top:185px" width="10" height="10" viewBox="0 0 10 10"><path d="M1 1L9 9M9 1L1 9" stroke="#222" stroke-width="2.0"/></svg>
<div class="t " style="left:542px;top:183.91px;font-size:14.28px;color:#333;transform:scaleY(1.1);transform-origin:0 12.09px;">Materials.scene</div>
<svg class="a" style="left:656px;top:185px" width="10" height="10" viewBox="0 0 10 10"><path d="M1 1L9 9M9 1L1 9" stroke="#222" stroke-width="2.0"/></svg>
<div class="t " style="left:686px;top:183.97px;font-size:14.21px;color:#1e1e1e;transform:scaleY(1.1);transform-origin:0 12.03px;">Heavy-JumpGate_JG4.obj*</div>
<svg class="a" style="left:872px;top:185px" width="10" height="10" viewBox="0 0 10 10"><path d="M1 1L9 9M9 1L1 9" stroke="#222" stroke-width="2.0"/></svg>
<div class="a" style="left:372px;top:202px;width:1px;height:843px;background:#d6d6d6"></div>
<div class="a" style="left:1547px;top:202px;width:1px;height:843px;background:#d6d6d6"></div>
<div class="a" style="left:373px;top:230px;width:245px;height:1px;background:#d6d6d6"></div>
<div class="a" style="left:695px;top:230px;width:852px;height:1px;background:#d6d6d6"></div>
<div class="a" style="left:618px;top:205px;width:78px;height:26px;background:#fff;border:1px solid #d6d6d6;border-bottom:none"></div>
<div class="t " style="left:381px;top:210.88px;font-size:15.5px;color:#333;transform:scaleY(1.1);transform-origin:0 13.12px;">'Root object'</div>
<svg class="a" style="left:479px;top:213px" width="10" height="10" viewBox="0 0 10 10"><path d="M1 1L9 9M9 1L1 9" stroke="#222" stroke-width="2.0"/></svg>
<div class="t " style="left:508px;top:210.96px;font-size:15.4px;color:#333;transform:scaleY(1.1);transform-origin:0 13.04px;">Flow graph</div>
<svg class="a" style="left:596px;top:213px" width="10" height="10" viewBox="0 0 10 10"><path d="M1 1L9 9M9 1L1 9" stroke="#222" stroke-width="2.0"/></svg>
<div class="t " style="left:625px;top:211.41px;font-size:14.87px;color:#1e1e1e;transform:scaleY(1.1);transform-origin:0 12.59px;">Script</div>
<svg class="a" style="left:677px;top:213px" width="10" height="10" viewBox="0 0 10 10"><path d="M1 1L9 9M9 1L1 9" stroke="#222" stroke-width="2.0"/></svg>
<div class="a" style="left:372px;top:231px;width:1176px;height:815px;background:#fff;border-left:2px solid #d0d0d0;border-right:2px solid #d0d0d0;border-bottom:2px solid #d0d0d0"></div>
<div class="t m" style="left:374px;top:234.57px;font-size:14.92px;color:#000"><span style="color:#00868e">Quaternion</span> GetRotationOffset()</div>
<div class="t m" style="left:374px;top:253.57px;font-size:14.92px;color:#000">{</div>
<div class="t m" style="left:374px;top:272.57px;font-size:14.92px;color:#000">    <span style="color:#0000ff">var</span> speed = -0.1;</div>
<div class="t m" style="left:374px;top:291.57px;font-size:14.92px;color:#000">    <span style="color:#0000ff">var</span> mat = <span style="color:#00868e">Matrix3</span>.FromRotateByX(<span style="color:#00868e">EngineApp</span>.EngineTime * speed);</div>
<div class="t m" style="left:374px;top:329.57px;font-size:14.92px;color:#000">    <span style="color:#00868e">Component_Scene</span> scene;</div>
<div class="t m" style="left:374px;top:348.57px;font-size:14.92px;color:#000">    scene.g</div>
<div class="t m" style="left:374px;top:386.57px;font-size:14.92px;color:#000">    <span style="color:#0000ff">return</span> mat.ToQuaternion();</div>
<div class="t m" style="left:374px;top:405.57px;font-size:14.92px;color:#000">}</div>
<svg class="a" style="left:409.5px;top:360.0px" width="48.5" height="5" viewBox="0 0 48.5 5"><path d="M0 3 L3.15 0.2 L6.30 3 L9.45 0.2 L12.60 3 L15.75 0.2 L18.90 3 L22.05 0.2 L25.20 3 L28.35 0.2 L31.50 3 L34.65 0.2 L37.80 3 L40.95 0.2 L44.10 3" fill="none" stroke="#f01010" stroke-width="1.4"/></svg>
<svg class="a" style="left:463px;top:360.0px" width="23" height="5" viewBox="0 0 23 5"><path d="M0 3 L3.15 0.2 L6.30 3 L9.45 0.2 L12.60 3 L15.75 0.2 L18.90 3" fill="none" stroke="#f01010" stroke-width="1.4"/></svg>
<div class="a" style="left:472px;top:345px;width:1px;height:19px;background:#000"></div>
<div class="a" style="left:470px;top:364px;width:361px;height:368px;background:#fff;border:1px solid #a0a0a0;box-shadow:1px 2px 10px rgba(0,0,0,0.22)"></div>
<div class="a" style="left:473px;top:649px;width:335px;height:23px;background:#0078d7"></div>
<div class="a" style="left:471px;top:365px;width:337px;height:344px;overflow:hidden">
<svg class="a" style="left:9px;top:15.699999999999989px" width="11" height="13" viewBox="0 0 11 13"><path d="M5.2 0.8L9.6 3.2V8.7L5.2 11.2L0.8 8.7V3.2Z" fill="#f2eef8" stroke="#7a50b0" stroke-width="1.1"/><path d="M0.8 3.2L5.2 5.8L9.6 3.2M5.2 5.8V11.2" fill="none" stroke="#7a50b0" stroke-width="1"/></svg>
<div class="t " style="left:30px;top:14.65px;font-size:14.82px;color:#1e1e1e;transform:scaleY(1.06);transform-origin:0 12.55px;">GetComponents</div>
<svg class="a" style="left:9px;top:40.69999999999999px" width="11" height="13" viewBox="0 0 11 13"><path d="M5.2 0.8L9.6 3.2V8.7L5.2 11.2L0.8 8.7V3.2Z" fill="#f2eef8" stroke="#7a50b0" stroke-width="1.1"/><path d="M0.8 3.2L5.2 5.8L9.6 3.2M5.2 5.8V11.2" fill="none" stroke="#7a50b0" stroke-width="1"/></svg>
<div class="t " style="left:30px;top:39.65px;font-size:14.82px;color:#1e1e1e;transform:scaleY(1.06);transform-origin:0 12.55px;">GetComponents&lt;&gt;</div>
<svg class="a" style="left:9px;top:65.69999999999999px" width="11" height="13" viewBox="0 0 11 13"><path d="M5.2 0.8L9.6 3.2V8.7L5.2 11.2L0.8 8.7V3.2Z" fill="#f2eef8" stroke="#7a50b0" stroke-width="1.1"/><path d="M0.8 3.2L5.2 5.8L9.6 3.2M5.2 5.8V11.2" fill="none" stroke="#7a50b0" stroke-width="1"/></svg>
<div class="t " style="left:30px;top:64.65px;font-size:14.82px;color:#1e1e1e;transform:scaleY(1.06);transform-origin:0 12.55px;">GetDisplayDevelopmentDataInThisApplication</div>
<svg class="a" style="left:9px;top:90.69999999999999px" width="11" height="13" viewBox="0 0 11 13"><path d="M5.2 0.8L9.6 3.2V8.7L5.2 11.2L0.8 8.7V3.2Z" fill="#f2eef8" stroke="#7a50b0" stroke-width="1.1"/><path d="M0.8 3.2L5.2 5.8L9.6 3.2M5.2 5.8V11.2" fill="none" stroke="#7a50b0" stroke-width="1"/></svg>
<div class="t " style="left:30px;top:89.65px;font-size:14.82px;color:#1e1e1e;transform:scaleY(1.06);transform-origin:0 12.55px;">GetHashCode</div>
<svg class="a" style="left:9px;top:115.69999999999999px" width="11" height="13" viewBox="0 0 11 13"><path d="M5.2 0.8L9.6 3.2V8.7L5.2 11.2L0.8 8.7V3.2Z" fill="#f2eef8" stroke="#7a50b0" stroke-width="1.1"/><path d="M0.8 3.2L5.2 5.8L9.6 3.2M5.2 5.8V11.2" fill="none" stroke="#7a50b0" stroke-width="1"/></svg>
<div class="t " style="left:30px;top:114.65px;font-size:14.82px;color:#1e1e1e;transform:scaleY(1.06);transform-origin:0 12.55px;">GetObjectsInSpace</div>
<svg class="a" style="left:8px;top:139.70000000000005px" width="11" height="14" viewBox="0 0 11 14"><path d="M5 0L1 7.5H5L3 13.5L10 5.5H6L8.5 0Z" fill="#d9891e"/></svg>
<div class="t " style="left:30px;top:139.65px;font-size:14.82px;color:#1e1e1e;transform:scaleY(1.06);transform-origin:0 12.55px;">GetObjectsInSpaceOverride</div>
<svg class="a" style="left:9px;top:165.70000000000005px" width="11" height="13" viewBox="0 0 11 13"><path d="M5.2 0.8L9.6 3.2V8.7L5.2 11.2L0.8 8.7V3.2Z" fill="#f2eef8" stroke="#7a50b0" stroke-width="1.1"/><path d="M0.8 3.2L5.2 5.8L9.6 3.2M5.2 5.8V11.2" fill="none" stroke="#7a50b0" stroke-width="1"/></svg>
<div class="t " style="left:30px;top:164.65px;font-size:14.82px;color:#1e1e1e;transform:scaleY(1.06);transform-origin:0 12.55px;">GetPathFromParent</div>
<svg class="a" style="left:9px;top:190.70000000000005px" width="11" height="13" viewBox="0 0 11 13"><path d="M5.2 0.8L9.6 3.2V8.7L5.2 11.2L0.8 8.7V3.2Z" fill="#f2eef8" stroke="#7a50b0" stroke-width="1.1"/><path d="M0.8 3.2L5.2 5.8L9.6 3.2M5.2 5.8V11.2" fill="none" stroke="#7a50b0" stroke-width="1"/></svg>
<div class="t " style="left:30px;top:189.65px;font-size:14.82px;color:#1e1e1e;transform:scaleY(1.06);transform-origin:0 12.55px;">GetPathFromRoot</div>
<svg class="a" style="left:9px;top:215.70000000000005px" width="11" height="13" viewBox="0 0 11 13"><path d="M5.2 0.8L9.6 3.2V8.7L5.2 11.2L0.8 8.7V3.2Z" fill="#f2eef8" stroke="#7a50b0" stroke-width="1.1"/><path d="M0.8 3.2L5.2 5.8L9.6 3.2M5.2 5.8V11.2" fill="none" stroke="#7a50b0" stroke-width="1"/></svg>
<div class="t " style="left:30px;top:214.65px;font-size:14.82px;color:#1e1e1e;transform:scaleY(1.06);transform-origin:0 12.55px;">GetProvidedType</div>
<svg class="a" style="left:8px;top:239.70000000000005px" width="11" height="14" viewBox="0 0 11 14"><path d="M5 0L1 7.5H5L3 13.5L10 5.5H6L8.5 0Z" fill="#d9891e"/></svg>
<div class="t " style="left:30px;top:239.65px;font-size:14.82px;color:#1e1e1e;transform:scaleY(1.06);transform-origin:0 12.55px;">GetRenderSceneData</div>
<svg class="a" style="left:9px;top:265.70000000000005px" width="11" height="13" viewBox="0 0 11 13"><path d="M5.2 0.8L9.6 3.2V8.7L5.2 11.2L0.8 8.7V3.2Z" fill="#f2eef8" stroke="#7a50b0" stroke-width="1.1"/><path d="M0.8 3.2L5.2 5.8L9.6 3.2M5.2 5.8V11.2" fill="none" stroke="#7a50b0" stroke-width="1"/></svg>
<div class="t " style="left:30px;top:264.65px;font-size:14.82px;color:#1e1e1e;transform:scaleY(1.06);transform-origin:0 12.55px;">GetType</div>
<svg class="a" style="left:3px;top:283px" width="28" height="26" viewBox="0 0 28 26"><circle cx="16.9" cy="10.8" r="6.3" fill="#fff"/><path d="M8.3 20.6L14 14.8" stroke="#fff" stroke-width="6" stroke-linecap="round"/><circle cx="16.9" cy="10.8" r="5.3" fill="#404040"/><path d="M8.3 20.6L14 14.8" stroke="#404040" stroke-width="4" stroke-linecap="round"/><path d="M14.9 10.6L19 6.4L22.5 9.9L17.6 13.1Z" fill="#fff"/></svg>
<div class="t " style="left:30px;top:289.65px;font-size:14.82px;color:#fff;transform:scaleY(1.06);transform-origin:0 12.55px;">Gravity</div>
<svg class="a" style="left:8px;top:314.70000000000005px" width="11" height="14" viewBox="0 0 11 14"><path d="M5 0L1 7.5H5L3 13.5L10 5.5H6L8.5 0Z" fill="#d9891e"/></svg>
<div class="t " style="left:30px;top:314.65px;font-size:14.82px;color:#1e1e1e;transform:scaleY(1.06);transform-origin:0 12.55px;">GravityChanged</div>
<svg class="a" style="left:9px;top:340.70000000000005px" width="11" height="13" viewBox="0 0 11 13"><path d="M5.2 0.8L9.6 3.2V8.7L5.2 11.2L0.8 8.7V3.2Z" fill="#f2eef8" stroke="#7a50b0" stroke-width="1.1"/><path d="M0.8 3.2L5.2 5.8L9.6 3.2M5.2 5.8V11.2" fill="none" stroke="#7a50b0" stroke-width="1"/></svg>
<div class="t " style="left:30px;top:339.65px;font-size:14.82px;color:#1e1e1e;transform:scaleY(1.06);transform-origin:0 12.55px;">MetadataGetMembersBySignature</div>
</div>
<div class="a" style="left:808px;top:373px;width:21px;height:357px;background:#f0f0f0"></div>
<svg class="a" style="left:814px;top:380px" width="11" height="7" viewBox="0 0 11 7"><path d="M1 6L5.5 1.5L10 6" fill="none" stroke="#a0a0a0" stroke-width="1.8"/></svg>
<svg class="a" style="left:814px;top:695px" width="11" height="7" viewBox="0 0 11 7"><path d="M1 1L5.5 5.5L10 1" fill="none" stroke="#a0a0a0" stroke-width="1.8"/></svg>
<div class="a" style="left:808px;top:451px;width:21px;height:146px;background:#cdcdcd"></div>
<div class="a" style="left:473px;top:709px;width:335px;height:21px;background:#f0f0f0"></div>
<svg class="a" style="left:480px;top:714px" width="7" height="11" viewBox="0 0 7 11"><path d="M6 1L1.5 5.5L6 10" fill="none" stroke="#a0a0a0" stroke-width="1.8"/></svg>
<svg class="a" style="left:794px;top:714px" width="7" height="11" viewBox="0 0 7 11"><path d="M1 1L5.5 5.5L1 10" fill="none" stroke="#a0a0a0" stroke-width="1.8"/></svg>
<div class="a" style="left:493px;top:709px;width:290px;height:21px;background:#cdcdcd"></div>
<div class="a" style="left:846px;top:372px;width:405px;height:52px;background:#f0f0f8;border:1px solid #767676"></div>
<div class="t " style="left:855px;top:382.37px;font-size:14.56px;color:#505050;"><span style="color:#1a8a90">Reference&lt;Vector3&gt; Component_Scene</span><span style="color:#505050">.Gravity { </span><span style="color:#0000ff">get</span><span style="color:#505050">; </span><span style="color:#0000ff">set</span><span style="color:#505050">; }</span></div>
<div class="t " style="left:855px;top:401.93px;font-size:14.85px;color:#505050;">The gravity applied on the physical objects.</div>
<div class="a" style="left:1553px;top:176px;width:362px;height:285px;border:1px solid #d4d4d4;background:#f0f0f0"></div>
<div class="a" style="left:1554px;top:200px;width:360px;height:1px;background:#d9d9d9"></div>
<div class="a" style="left:1554px;top:226px;width:360px;height:1px;background:#d9d9d9"></div>
<div class="t " style="left:1561px;top:181.55px;font-size:14.7px;color:#3b3b3b;transform:scaleY(1.12);transform-origin:0 12.45px;">Objects</div>
<svg class="a" style="left:1863px;top:186px" width="8" height="5" viewBox="0 0 8 5"><path d="M0.3 0.3H7.7L4 4.6Z" fill="#222"/></svg>
<svg class="a" style="left:1881px;top:182px" width="8" height="11" viewBox="0 0 8 11"><rect x="1.6" y="0.9" width="4.6" height="6" fill="#f0f0f0" stroke="#222" stroke-width="1.6"/><rect x="0" y="6.4" width="8" height="1.3" fill="#222"/><rect x="3.4" y="7.5" width="1.2" height="3.3" fill="#222"/></svg>
<svg class="a" style="left:1898px;top:183px" width="10" height="10" viewBox="0 0 10 10"><path d="M1 1L9 9M9 1L1 9" stroke="#1c1c1c" stroke-width="1.8"/></svg>
<svg class="a" style="left:1557px;top:205px" width="17" height="17" viewBox="0 0 17 17"><path d="M1.5 1.5L7.5 7.5" stroke="#8c8c8c" stroke-width="1.5" stroke-linecap="round"/><path d="M9.8 9.8L15.2 15.2" stroke="#2a7ad6" stroke-width="3" stroke-linecap="round"/><path d="M2 15L9.5 7.5" stroke="#7a7a7a" stroke-width="3.6" stroke-linecap="round"/><path d="M2 15L9.5 7.5" stroke="#fbfbfb" stroke-width="1.8" stroke-linecap="round"/><circle cx="11.8" cy="5" r="3.9" fill="#fbfbfb" stroke="#7a7a7a" stroke-width="1.1"/><path d="M12 4.6L13.2 0.2L17.5 2.2L16.2 5.6Z" fill="#f0f0f0"/><path d="M12.6 1.6L13.4 4.2L16 4.6" fill="none" stroke="#7a7a7a" stroke-width="1"/><circle cx="3.2" cy="13.8" r="0.9" fill="#999"/></svg>
<svg class="a" style="left:1580px;top:205px" width="16" height="16" viewBox="0 0 16 16"><path d="M7.5 6.5V11.5H10" fill="none" stroke="#7a7a7a" stroke-width="1.1"/><path d="M0.2 5.5L5.5 0L9.6 3.5L4 9.2Z" fill="#c9a820" stroke="#b08c10" stroke-width="0.6"/><path d="M8 7.5L11.5 3.9L14 6.8L10.6 9.7Z" fill="#44c4f4" stroke="#1c90c8" stroke-width="0.6"/><path d="M9.2 12.5L12.5 9L15 11.5L11.8 14.9Z" fill="#f488d8" stroke="#c04098" stroke-width="0.6"/></svg>
<div class="a" style="left:1603px;top:202px;width:1px;height:22px;background:#cfcfcf"></div>
<svg class="a" style="left:1609px;top:205px" width="17" height="17" viewBox="0 0 17 17"><path d="M0.5 0.5H9L13.5 5V16.5H0.5Z" fill="#e2e2e2" stroke="#cacaca"/><path d="M9 0.5V5H13.5" fill="none" stroke="#cacaca"/><path d="M6 15L15 6L17 8L8 17H6Z" fill="#d8d8d8" stroke="#bdbdbd" stroke-width="0.8"/></svg>
<svg class="a" style="left:1633px;top:206px" width="16" height="15" viewBox="0 0 16 15"><rect x="2.5" y="0.5" width="13" height="10" fill="#e2e2e2" stroke="#c4c4c4"/><rect x="0.5" y="3.5" width="13" height="11" fill="#e8e8e8" stroke="#c4c4c4"/><rect x="1" y="4" width="12" height="2" fill="#d0d0d0"/></svg>
<div class="a" style="left:1655px;top:202px;width:1px;height:22px;background:#cfcfcf"></div>
<svg class="a" style="left:1661px;top:205px" width="17" height="17" viewBox="0 0 17 17"><path d="M0.5 0.5H9L13.5 5V16.5H0.5Z" fill="#e2e2e2" stroke="#cacaca"/><path d="M9 0.5V5H13.5" fill="none" stroke="#cacaca"/><path d="M12 8.5L13.3 11.3L16.3 11.6L14 13.6L14.8 16.5L12 15L9.2 16.5L10 13.6L7.7 11.6L10.7 11.3Z" fill="#dedede" stroke="#c4c4c4" stroke-width="0.8"/></svg>
<svg class="a" style="left:1686px;top:207px" width="12" height="12" viewBox="0 0 12 12"><path d="M2 2L10 10M10 2L2 10" stroke="#b4b4b4" stroke-width="3.2" stroke-linecap="round"/></svg>
<svg class="a" style="left:1708px;top:208px" width="15" height="11" viewBox="0 0 15 11"><rect x="0.5" y="0.5" width="14" height="10" fill="#e6e6e6" stroke="#a9a9a9" stroke-width="1.2"/><path d="M3.5 2.5V8.5M2.5 2.5H4.5M2.5 8.5H4.5" stroke="#888" stroke-width="0.8"/></svg>
<svg class="a" style="left:1731px;top:205px" width="15" height="17" viewBox="0 0 15 17"><path d="M0.5 0.5H7L9.5 3V12.5H0.5Z" fill="#e6e6e6" stroke="#c6c6c6"/><path d="M4.5 4.5H11L14.5 8V16.5H4.5Z" fill="#e8e8e8" stroke="#c0c0c0"/><path d="M6.5 9.5H12.5M6.5 11.5H12.5M6.5 13.5H12.5" stroke="#c8c8c8"/></svg>
<svg class="a" style="left:1754px;top:206px" width="14" height="15" viewBox="0 0 14 15"><path d="M7 0.5L13.5 7H9.5V14.5H4.5V7H0.5Z" fill="#c4c4c4"/></svg>
<svg class="a" style="left:1777px;top:206px" width="14" height="15" viewBox="0 0 14 15"><path d="M7 14.5L13.5 8H9.5V0.5H4.5V8H0.5Z" fill="#c4c4c4"/></svg>
<svg class="a" style="left:1801px;top:205px" width="13" height="16" viewBox="0 0 13 16"><path d="M2 0L7.5 10M10 0L5 10" stroke="#bbb" stroke-width="1.2"/><circle cx="3.5" cy="13" r="2.3" fill="none" stroke="#b4b4b4" stroke-width="1.2"/><circle cx="10" cy="13" r="2.3" fill="none" stroke="#b4b4b4" stroke-width="1.2"/></svg>
<svg class="a" style="left:1823px;top:205px" width="15" height="17" viewBox="0 0 15 17"><path d="M0.5 0.5H7L9.5 3V12.5H0.5Z" fill="#e6e6e6" stroke="#c6c6c6"/><path d="M4.5 4.5H11L14.5 8V16.5H4.5Z" fill="#e8e8e8" stroke="#c0c0c0"/><path d="M6.5 9.5H12.5M6.5 11.5H12.5M6.5 13.5H12.5" stroke="#c8c8c8"/></svg>
<svg class="a" style="left:1845px;top:205px" width="16" height="17" viewBox="0 0 16 17"><rect x="0.5" y="1.5" width="9" height="11" fill="#dcdcdc" stroke="#c4c4c4"/><rect x="3" y="0.5" width="4" height="2.5" fill="#c8c8c8"/><path d="M5.5 5.5H12L15.5 9V16.5H5.5Z" fill="#e8e8e8" stroke="#c0c0c0"/><path d="M7.5 10.5H13.5M7.5 12.5H13.5M7.5 14.5H13.5" stroke="#c8c8c8"/></svg>
<div class="a" style="left:1554px;top:227px;width:360px;height:233px;background:#fff"></div>
<svg class="a" style="left:1561px;top:233px" width="10" height="10" viewBox="0 0 10 10"><rect x="0.5" y="0.5" width="9" height="9" fill="#f4f4f4" stroke="#9a9a9a"/><path d="M2.5 5H7.5" stroke="#3a4a9a" stroke-width="1.1"/></svg>
<svg class="a" style="left:1575px;top:225.5px" width="20" height="20" viewBox="0 0 20 20"><g transform="scale(0.5)"><defs><linearGradient id="gps" x1="0" y1="0" x2="0" y2="1"><stop offset="0" stop-color="#ffb000"/><stop offset="1" stop-color="#fff27a"/></linearGradient></defs><path d="M6 13H15V11.8A3.6 3.6 0 1 1 19.4 11.8V13H28V21.6H30.4A3.6 3.6 0 1 1 30.4 26.4H28V35H21.2A4.2 4.2 0 1 0 14.8 35H6V25.2A4.1 4.1 0 1 0 6 19.6Z" fill="url(#gps)" stroke="#d98a30" stroke-width="2.4"/></g></svg>
<div class="t " style="left:1599px;top:232.08px;font-size:12.9px;color:#000;">'Root' - Component_Import3D</div>
<svg class="a" style="left:1580px;top:254px" width="10" height="10" viewBox="0 0 10 10"><rect x="0.5" y="0.5" width="9" height="9" fill="#f4f4f4" stroke="#9a9a9a"/><path d="M2.5 5H7.5" stroke="#3a4a9a" stroke-width="1.1"/><path d="M5 2.5V7.5" stroke="#3a4a9a" stroke-width="1.1"/></svg>
<svg class="a" style="left:1594px;top:246.5px" width="20" height="20" viewBox="0 0 20 20"><g transform="scale(0.5)"><defs><linearGradient id="gps" x1="0" y1="0" x2="0" y2="1"><stop offset="0" stop-color="#ffb000"/><stop offset="1" stop-color="#fff27a"/></linearGradient></defs><path d="M6 13H15V11.8A3.6 3.6 0 1 1 19.4 11.8V13H28V21.6H30.4A3.6 3.6 0 1 1 30.4 26.4H28V35H21.2A4.2 4.2 0 1 0 14.8 35H6V25.2A4.1 4.1 0 1 0 6 19.6Z" fill="url(#gps)" stroke="#d98a30" stroke-width="2.4"/></g></svg>
<div class="t " style="left:1618px;top:253.08px;font-size:12.9px;color:#000;">Materials - Component</div>
<svg class="a" style="left:1580px;top:275px" width="10" height="10" viewBox="0 0 10 10"><rect x="0.5" y="0.5" width="9" height="9" fill="#f4f4f4" stroke="#9a9a9a"/><path d="M2.5 5H7.5" stroke="#3a4a9a" stroke-width="1.1"/><path d="M5 2.5V7.5" stroke="#3a4a9a" stroke-width="1.1"/></svg>
<svg class="a" style="left:1594px;top:267.5px" width="20" height="20" viewBox="0 0 20 20"><g transform="scale(0.5)"><defs><linearGradient id="gps" x1="0" y1="0" x2="0" y2="1"><stop offset="0" stop-color="#ffb000"/><stop offset="1" stop-color="#fff27a"/></linearGradient></defs><path d="M6 13H15V11.8A3.6 3.6 0 1 1 19.4 11.8V13H28V21.6H30.4A3.6 3.6 0 1 1 30.4 26.4H28V35H21.2A4.2 4.2 0 1 0 14.8 35H6V25.2A4.1 4.1 0 1 0 6 19.6Z" fill="url(#gps)" stroke="#d98a30" stroke-width="2.4"/></g></svg>
<div class="t " style="left:1618px;top:274.08px;font-size:12.9px;color:#000;">Meshes - Component</div>
<svg class="a" style="left:1580px;top:296px" width="10" height="10" viewBox="0 0 10 10"><rect x="0.5" y="0.5" width="9" height="9" fill="#f4f4f4" stroke="#9a9a9a"/><path d="M2.5 5H7.5" stroke="#3a4a9a" stroke-width="1.1"/><path d="M5 2.5V7.5" stroke="#3a4a9a" stroke-width="1.1"/></svg>
<svg class="a" style="left:1594px;top:288.5px" width="20" height="20" viewBox="0 0 20 20"><g transform="scale(0.5)"><defs><linearGradient id="gps" x1="0" y1="0" x2="0" y2="1"><stop offset="0" stop-color="#ffb000"/><stop offset="1" stop-color="#fff27a"/></linearGradient></defs><path d="M6 13H15V11.8A3.6 3.6 0 1 1 19.4 11.8V13H28V21.6H30.4A3.6 3.6 0 1 1 30.4 26.4H28V35H21.2A4.2 4.2 0 1 0 14.8 35H6V25.2A4.1 4.1 0 1 0 6 19.6Z" fill="url(#gps)" stroke="#d98a30" stroke-width="2.4"/></g></svg>
<div class="t " style="left:1618px;top:295.08px;font-size:12.9px;color:#000;">Object In Space - Component_ObjectInSpace</div>
<div class="a" style="left:1553px;top:467px;width:362px;height:579px;border:1px solid #d4d4d4;background:#f0f0f0"></div>
<div class="a" style="left:1554px;top:491px;width:360px;height:1px;background:#d9d9d9"></div>
<div class="t " style="left:1561px;top:472.38px;font-size:14.9px;color:#3b3b3b;transform:scaleY(1.12);transform-origin:0 12.62px;">Settings</div>
<svg class="a" style="left:1863px;top:477px" width="8" height="5" viewBox="0 0 8 5"><path d="M0.3 0.3H7.7L4 4.6Z" fill="#222"/></svg>
<svg class="a" style="left:1881px;top:473px" width="8" height="11" viewBox="0 0 8 11"><rect x="1.6" y="0.9" width="4.6" height="6" fill="#f0f0f0" stroke="#222" stroke-width="1.6"/><rect x="0" y="6.4" width="8" height="1.3" fill="#222"/><rect x="3.4" y="7.5" width="1.2" height="3.3" fill="#222"/></svg>
<svg class="a" style="left:1898px;top:474px" width="10" height="10" viewBox="0 0 10 10"><path d="M1 1L9 9M9 1L1 9" stroke="#1c1c1c" stroke-width="1.8"/></svg>
<div class="t " style="left:1561px;top:502.38px;font-size:13.6px;color:#000;font-weight:bold">Script</div>
<svg class="a" style="left:1887px;top:501px" width="16" height="16" viewBox="0 0 16 16"><path d="M7.5 6.5V11.5H10" fill="none" stroke="#7a7a7a" stroke-width="1.1"/><path d="M0.2 5.5L5.5 0L9.6 3.5L4 9.2Z" fill="#c9a820" stroke="#b08c10" stroke-width="0.6"/><path d="M8 7.5L11.5 3.9L14 6.8L10.6 9.7Z" fill="#44c4f4" stroke="#1c90c8" stroke-width="0.6"/><path d="M9.2 12.5L12.5 9L15 11.5L11.8 14.9Z" fill="#f488d8" stroke="#c04098" stroke-width="0.6"/></svg>
<div class="t " style="left:1561.4px;top:524.28px;font-size:13.37px;color:#000;">Component_CSharpScript</div>
<div class="a" style="left:1558px;top:553px;width:23px;height:22px;background:#c8c8c8"></div>
<svg class="a" style="left:1561px;top:556px" width="17" height="15" viewBox="0 0 17 15"><rect x="0.5" y="1.5" width="15" height="13" rx="1" fill="#f4f8ff" stroke="#3a7ad0"/><rect x="1" y="2" width="14" height="2.5" fill="#8ab8f0"/><path d="M6 5L10 1L16 5L12 9Z" fill="#e0b080" stroke="#b08050" stroke-width="0.6"/><path d="M3 8H4M3 10H4M3 12H4" stroke="#e04040"/><path d="M5 10H12M5 12H12" stroke="#999" stroke-width="0.6"/></svg>
<svg class="a" style="left:1587px;top:557px" width="12" height="15" viewBox="0 0 12 15"><path d="M6 0L1 8H5L2.5 14.5L11 5.5H7L10 0Z" fill="#f4d020" stroke="#c8a010" stroke-width="0.6"/></svg>
<div class="a" style="left:1558px;top:580px;width:352px;height:21px;background:#a9a9a9"></div>
<div class="t " style="left:1561.4px;top:583.14px;font-size:13.3px;color:#000;">Component</div>
<div class="a" style="left:1709px;top:603px;width:6px;height:56px;background:#e2e2e2"></div>
<div class="t " style="left:1583px;top:610.74px;font-size:13.3px;color:#000;">Enabled</div>
<svg class="a" style="left:1762px;top:609px" width="16" height="16" viewBox="0 0 16 16"><rect x="0.5" y="0.5" width="15" height="15" fill="#fff" stroke="#7a7a7a"/><path d="M3.5 8L6.5 11L12.5 4.5" fill="none" stroke="#2a2a2a" stroke-width="1.9"/></svg>
<div class="t " style="left:1583px;top:638.74px;font-size:13.3px;color:#000;">Name</div>
<div class="a" style="left:1762px;top:634px;width:146px;height:22px;background:#fff;border:1px solid #d9d9d9"></div>
<div class="t " style="left:1765.5px;top:638.14px;font-size:13.3px;color:#000;">Script</div>
<div class="a" style="left:1558px;top:661px;width:352px;height:21px;background:#a9a9a9"></div>
<div class="t " style="left:1561.4px;top:664.74px;font-size:13.3px;color:#000;">CSharp Script</div>
<div class="a" style="left:1709px;top:684px;width:6px;height:28px;background:#e2e2e2"></div>
<div class="t " style="left:1583px;top:691.74px;font-size:13.3px;color:#000;">Code</div>
<div class="a" style="left:1720px;top:695px;width:5px;height:5px;border-radius:50%;background:#000"></div>
<div class="a" style="left:1732px;top:687px;width:27px;height:22px;background:#f4f4f4;border:1px solid #a8a8a8"></div>
<div class="a" style="left:1762px;top:687px;width:118px;height:22px;background:#fff;border:1px solid #d9d9d9;overflow:hidden">
<div class="t " style="left:3.5px;top:4.34px;font-size:13.3px;color:#000;">Quaternion GetRotationOffset()</div>
</div>
<div class="a" style="left:1882px;top:687px;width:26px;height:22px;background:#fafafa;border:1px solid #a8a8a8"></div>
<svg class="a" style="left:1889px;top:694px" width="11" height="7" viewBox="0 0 11 7"><path d="M0.5 0.5H10.5L5.5 5.5Z" fill="#111"/></svg>
<div class="a" style="left:1565px;top:999px;width:116px;height:32px;background:#fbfbfb;border:1px solid #adadad"></div>
<div class="a" style="left:1688px;top:999px;width:116px;height:32px;background:#fbfbfb;border:1px solid #adadad"></div>
<div class="t" style="left:1422px;width:400px;text-align:center;top:1009.14px;font-size:13.3px;color:#333;">Update</div>
<div class="t" style="left:1544.5px;width:400px;text-align:center;top:1009.14px;font-size:13.3px;color:#333;">Info</div>
</body></html>
